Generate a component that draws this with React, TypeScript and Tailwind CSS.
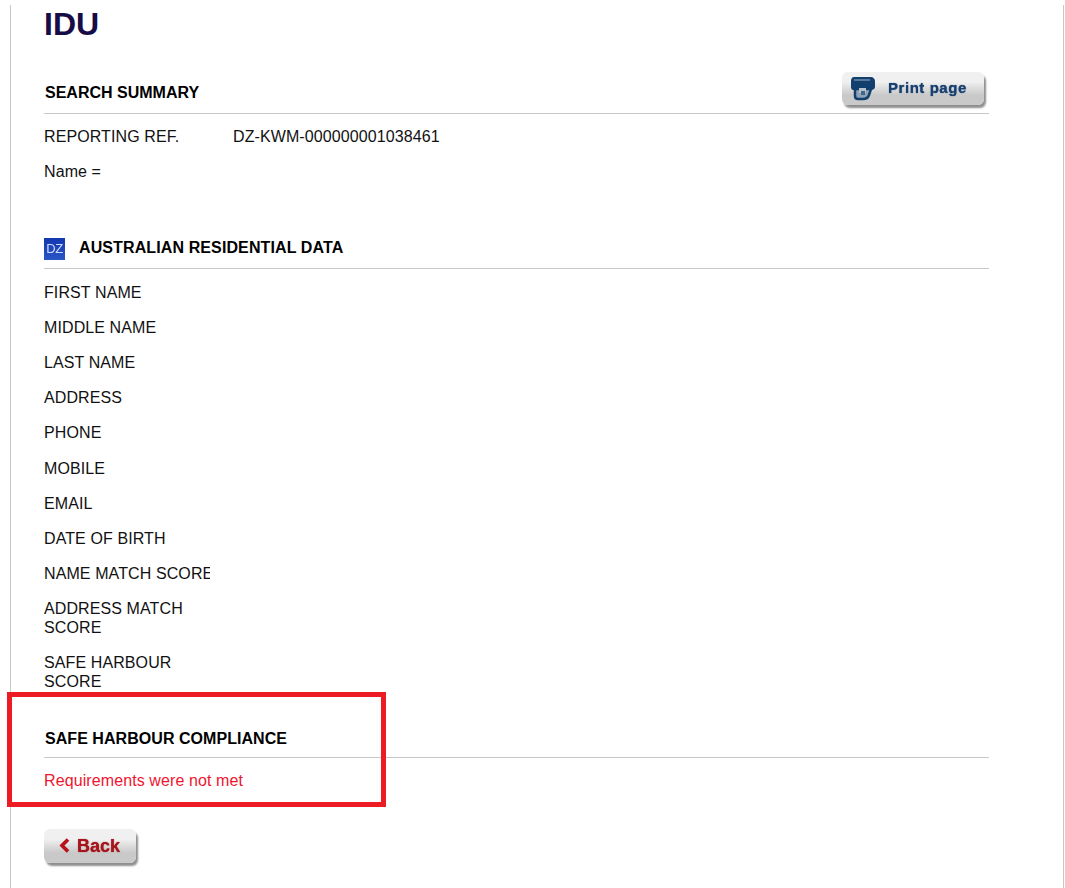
const fields = [
  "FIRST NAME",
  "MIDDLE NAME",
  "LAST NAME",
  "ADDRESS",
  "PHONE",
  "MOBILE",
  "EMAIL",
  "DATE OF BIRTH",
];

function Field({ label }: { label: string }) {
  return <div className="h-[35.1px] leading-[19px] pt-[7px]">{label}</div>;
}

function PrintButton() {
  return (
    <button className="flex h-[33px] w-[142px] items-center rounded-[6px] bg-linear-to-b from-[#f1f0f1] from-30% to-[#c9c9c9] to-70% pl-[8px] shadow-[2px_3px_2px_#8f8f8f]">
      <svg width="26" height="26" viewBox="0 0 26 26" className="blur-[0.5px]">
        <path d="M4 1h17c2 0 4 2 4 4v6c0 2-2 3-4 3h-1l-1 2H5l-1-2H3c-1 0-2-1-2-3V5c0-2 1-4 3-4z" fill="#123f6e" />
        <path d="M4 4h16" stroke="#6f8caa" strokeWidth="1.5" />
        <path d="M5 13h16l-2 6c-1 3-3 4-6 4H8c-2 0-3-1-3-3z" fill="#8fa3b6" stroke="#123f6e" strokeWidth="2.5" />
        <path d="M9 12h7v5H9z" fill="#b5c2ce" />
        <path d="M11 15h4v4h-4z" fill="#42668a" />
      </svg>
      <span className="ml-[12px] text-[15px] font-bold tracking-[0.55px] text-[#17406f] blur-[0.3px] [text-shadow:0_0_1px_#17406f]">Print page</span>
    </button>
  );
}

function BackButton() {
  return (
    <button className="flex h-[34px] w-[92px] items-center rounded-[6px] bg-linear-to-b from-[#f1f0f1] from-30% to-[#c9c9c9] to-70% pl-[15px] shadow-[2px_3px_2px_#8f8f8f]">
      <svg width="11" height="15" viewBox="0 0 11 15" className="blur-[0.3px]">
        <path d="M9 1.5 3 7.5 9 13.5" fill="none" stroke="#b5121b" strokeWidth="3.6" />
      </svg>
      <span className="ml-[7px] pt-[1px] text-[18px] font-bold tracking-normal text-[#a5151c] blur-[0.3px] [text-shadow:0_0_1px_#a5151c]">Back</span>
    </button>
  );
}

export default function App() {
  return (
    <div className="relative h-[888px] overflow-hidden bg-white font-['Liberation_Sans',Arial,sans-serif] text-[16px] tracking-[0.1px] text-[#111]">
      <div className="mt-[5px] ml-[10px] mr-[1px] h-[883px] border-x border-[#c8c8c8] pl-[33px] pr-[74px]">
        <h1 className="h-[41px] pt-[1px] text-[32px] leading-[37px] font-bold tracking-normal text-[#180c46]">IDU</h1>

        <div className="flex h-[68px] items-end justify-between border-b border-[#c8c8c8] pl-[1px]">
          <h2 className="pb-[11px] leading-[19px] font-bold tracking-normal text-black">SEARCH SUMMARY</h2>
          <div className="pr-[5px] pb-[8px]">
            <PrintButton />
          </div>
        </div>
        <div className="flex h-[35px] items-end leading-[19px]">
          <div className="w-[189px] pb-[3px]">REPORTING REF.</div>
          <div className="pb-[3px]">DZ-KWM-000000001038461</div>
        </div>
        <div className="h-[35px] pt-[13px] leading-[19px]">Name =</div>

        <div className="mt-[42px] flex h-[43px] items-center border-b border-[#c8c8c8]">
          <div className="mt-[4px] flex h-[22px] w-[21px] items-center justify-center bg-linear-to-b from-[#1238ad] to-[#2b56c6] text-[13px] tracking-tight text-[#cfdbf7] blur-[0.3px]">DZ</div>
          <h2 className="ml-[14px] leading-[19px] font-bold tracking-[0.11px] text-black">AUSTRALIAN RESIDENTIAL DATA</h2>
        </div>

        <div className="mt-[7.05px] w-[166px]">
          {fields.map((label) => (
            <Field key={label} label={label} />
          ))}
          <div className="h-[35.15px] overflow-hidden pt-[7px] leading-[19px] whitespace-nowrap">NAME MATCH SCORE</div>
          <div className="h-[54px] pt-[7px] leading-[19px]">ADDRESS MATCH SCORE</div>
          <div className="h-[53px] pt-[7px] leading-[19px]">SAFE HARBOUR SCORE</div>
        </div>

        <div className="mt-[21px] flex h-[38px] items-center border-b border-[#c8c8c8] pl-[1px]">
          <h2 className="leading-[19px] font-bold tracking-[0.05px] text-black">SAFE HARBOUR COMPLIANCE</h2>
        </div>
        <p className="mt-[13px] leading-[19px] text-[#f0142f]">Requirements were not met</p>

        <div className="mt-[39px]">
          <BackButton />
        </div>
      </div>

      <div className="absolute top-[692px] left-[7px] h-[115px] w-[379px] border-[5px] border-[#ed1c24]" />
    </div>
  );
}
